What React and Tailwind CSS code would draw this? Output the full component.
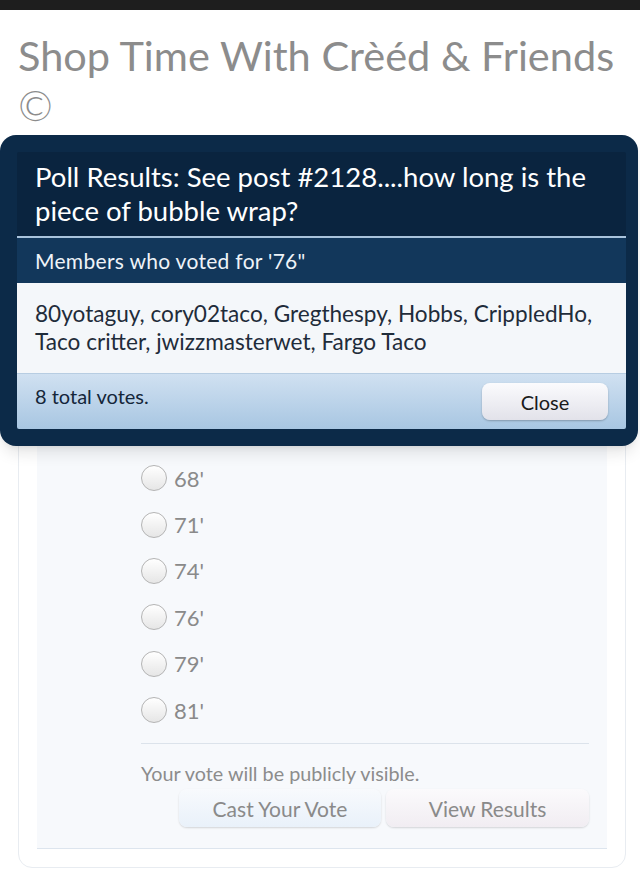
const options = ["68'", "71'", "74'", "76'", "79'", "81'"];

const Radio = () => (
    <span className="block h-[26px] w-[26px] rounded-full border-[1.5px] border-[#b4b4b4] bg-gradient-to-b from-white to-[#e6e6e6]" />
);

const PollModal = () => (
    <div className="absolute left-0 top-[135px] w-[638px] rounded-[16px] bg-[#0c2a48] pb-[17px] pl-[17px] pr-[12px] pt-[17px] shadow-lg">
        <div className="overflow-hidden rounded-[2px]">
            <div className="whitespace-nowrap bg-[#0a243f] px-[18px] py-[8px] text-[27.5px] leading-[34px] text-white">
                Poll Results: See post #2128....how long is the
                <br />
                piece of bubble wrap?
            </div>
            <div className="h-[2px] bg-[#a9c3dc]" />
            <div className="flex h-[45px] items-center bg-[#12375b] px-[18px] text-[21px] tracking-[0.3px] text-[#eef3f8]">
                Members who voted for '76"
            </div>
            <div className="whitespace-nowrap bg-[#f4f7fa] px-[18px] py-[17px] text-[22.6px] leading-[28px] text-[#1f2c3a]">
                80yotaguy, cory02taco, Gregthespy, Hobbs, CrippledHo,
                <br />
                Taco critter, jwizzmasterwet, Fargo Taco
            </div>
            <div className="flex h-[56px] items-center justify-between border-t border-[#b7cde2] bg-gradient-to-b from-[#d0e1f1] to-[#a8c6e2] pl-[18px] pr-[18px]">
                <span className="-mt-[12px] text-[20px] text-[#14263a]">8 total votes.</span>
                <button className="h-[37px] w-[126px] rounded-[8px] bg-gradient-to-b from-[#fbfbfd] to-[#e2e2ea] text-[20px] text-[#1a1a1a] shadow-[0_1px_2px_rgba(0,0,0,0.25)]">
                    Close
                </button>
            </div>
        </div>
    </div>
);

export default function App() {
    return (
        <div className="relative min-h-[890px] bg-white font-['Lato',sans-serif]">
            <div className="h-[10px] bg-[#1e1e1e]" />
            <h1 className="px-[18px] pt-[20px] text-[41.5px] leading-[50px] text-[#8c8c8c]">
                Shop Time With Crèéd &amp; Friends
                <br />
                <span className="font-light">©</span>
            </h1>
            <div className="ml-[18px] mr-[14px] mt-[10px] rounded-[14px] border border-[#e8ecf1] pb-[18px]">
                <div className="mx-[18px] border-b border-[#dde5ee] bg-[#f7f9fc] pb-[21px] pt-[314px]">
                    <div className="pl-[104px]">
                        {options.map((o) => (
                            <div key={o} className="flex h-[46.4px] items-center gap-[7px]">
                                <Radio />
                                <span className="text-[22px] text-[#8a8a8a]">{o}</span>
                            </div>
                        ))}
                    </div>
                    <div className="ml-[104px] mr-[18px] mt-[10px] h-px bg-[#dce3eb]" />
                    <p className="ml-[104px] mt-[17px] text-[19.8px] leading-[25px] text-[#8c8c8c]">
                        Your vote will be publicly visible.
                    </p>
                    <div className="mt-[3px] flex justify-end gap-[5px] pr-[18px]">
                        <button className="h-[38px] w-[202px] rounded-[8px] bg-gradient-to-b from-[#f8fafd] to-[#e9f1fa] text-[21px] text-[#8a8a8a] shadow-[0_1px_2px_rgba(0,0,0,0.15)]">
                            Cast Your Vote
                        </button>
                        <button className="h-[38px] w-[203px] rounded-[8px] bg-gradient-to-b from-[#fbfafc] to-[#f1edf2] text-[21px] text-[#8a8a8a] shadow-[0_1px_2px_rgba(0,0,0,0.15)]">
                            View Results
                        </button>
                    </div>
                </div>
            </div>
            <PollModal />
        </div>
    );
}
